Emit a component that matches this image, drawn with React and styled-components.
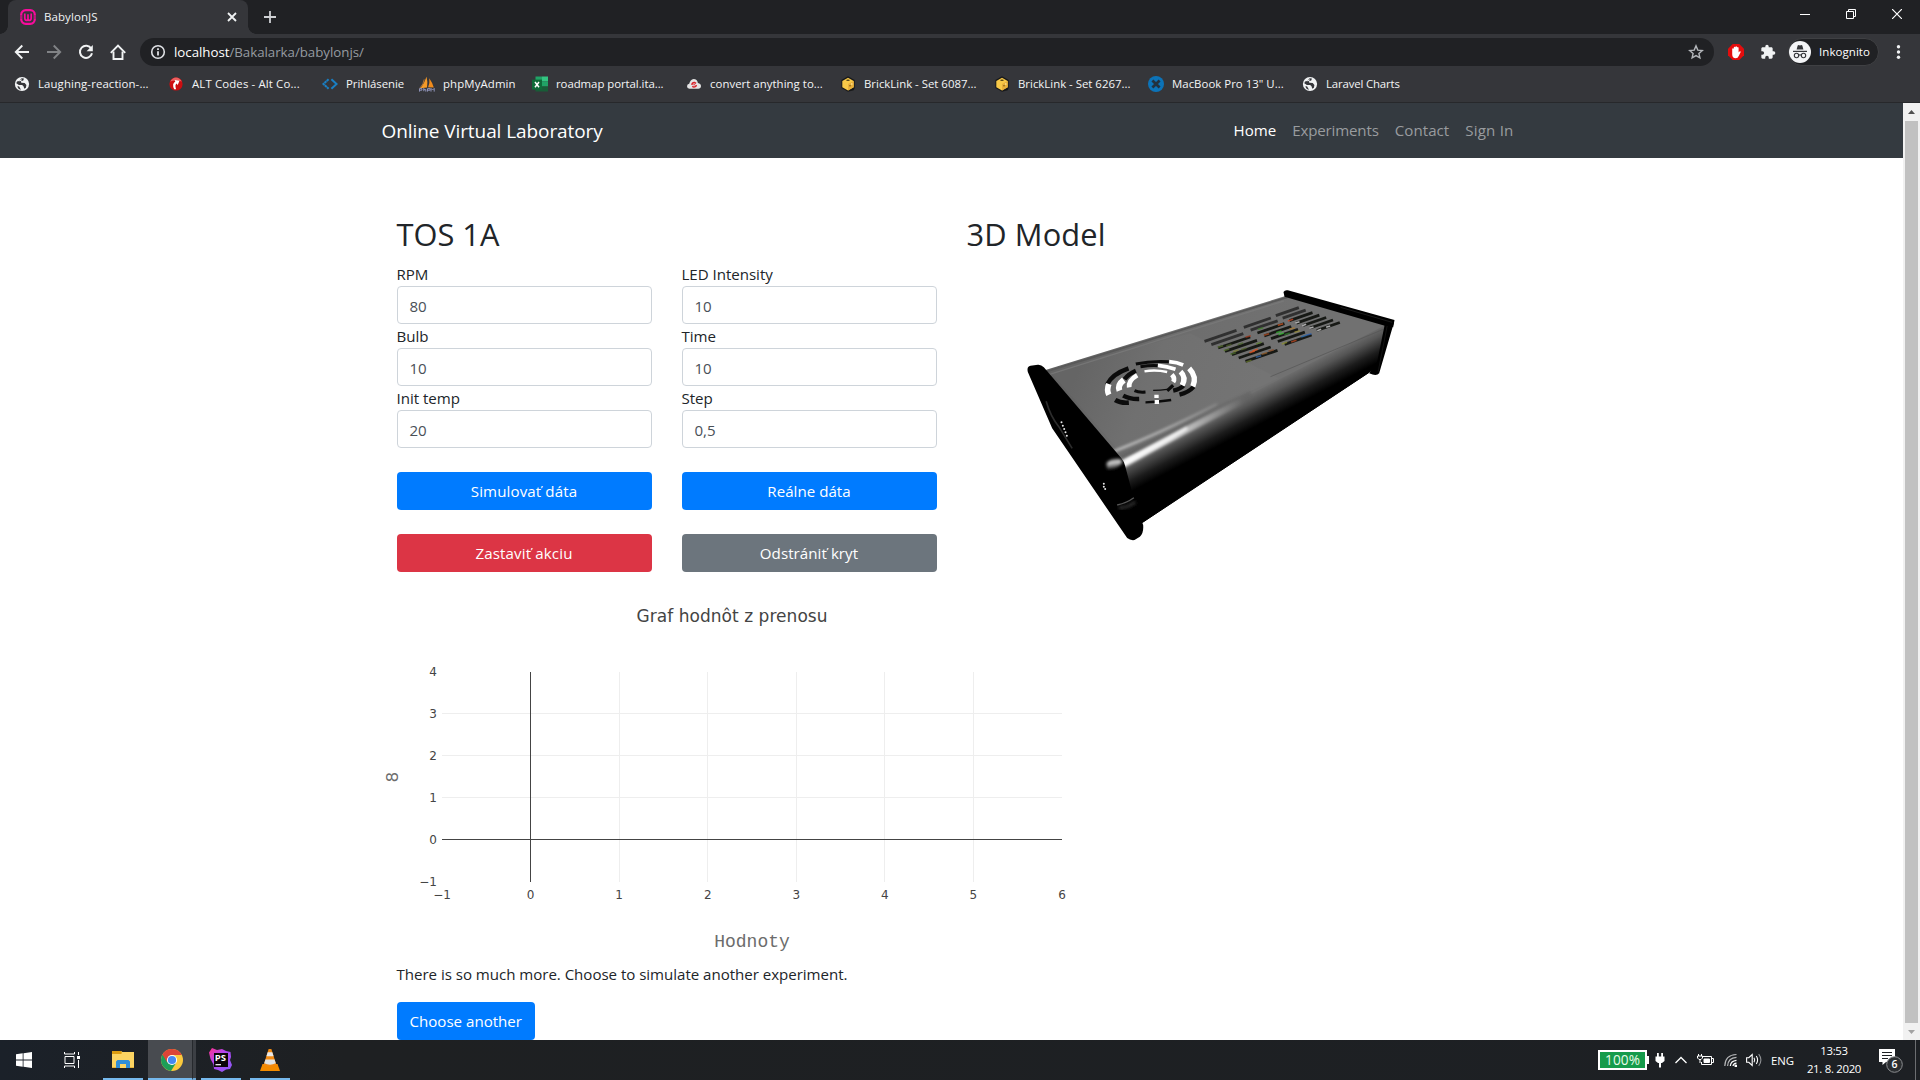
import React from "react";
import styled, { createGlobalStyle } from "styled-components";

const UI_FONT = `"Open Sans", "Noto Sans", sans-serif`;
const CHART_FONT = `"DejaVu Sans", sans-serif`;
const MONO_FONT = `"Liberation Mono", monospace`;

const GlobalStyle = createGlobalStyle`
  *, *::before, *::after { box-sizing: border-box; }
  html, body { margin: 0; padding: 0; overflow: hidden; }
  body { font-family: ${UI_FONT}; background: #fff; }
`;

const Screen = styled.div`
  width: 1920px;
  height: 1080px;
  display: flex;
  flex-direction: column;
  overflow: hidden;
`;

/* ---------- browser chrome ---------- */

const TabStrip = styled.div`
  height: 34px;
  flex: none;
  display: flex;
  align-items: flex-start;
  background: #202124;
  padding-left: 8px;
`;

const Tab = styled.div`
  position: relative;
  width: 240px;
  height: 34px;
  display: flex;
  align-items: center;
  padding: 0 10px 0 12px;
  background: #35363a;
  border-radius: 8px 8px 0 0;
  &::before,
  &::after {
    content: "";
    position: absolute;
    bottom: 0;
    width: 8px;
    height: 8px;
  }
  &::before {
    left: -8px;
    background: radial-gradient(circle at 0 0, transparent 7.5px, #35363a 8px);
  }
  &::after {
    right: -8px;
    background: radial-gradient(circle at 100% 0, transparent 7.5px, #35363a 8px);
  }
`;

const TabTitle = styled.span`
  flex: 1;
  margin-left: 8px;
  font-size: 11.5px;
  letter-spacing: 0.08px;
  line-height: 16px;
  color: #f1f3f4;
`;

const NewTab = styled.div`
  display: flex;
  margin: 11px 0 0 16px;
`;

const WindowButtons = styled.div`
  margin-left: auto;
  display: flex;
`;

const WindowButton = styled.div`
  width: 46px;
  height: 28px;
  display: flex;
  align-items: center;
  justify-content: center;
`;

const Toolbar = styled.div`
  height: 34px;
  flex: none;
  display: flex;
  align-items: center;
  background: #35363a;
  padding: 2px 13px 0 14px;
`;

const ToolIcon = styled.div`
  width: 16px;
  height: 16px;
  margin-right: 16px;
  display: flex;
`;

const Omnibox = styled.div`
  width: 1574px;
  height: 28px;
  display: flex;
  align-items: center;
  margin-left: -2px;
  padding: 0 10px;
  border-radius: 14px;
  background: #202124;
`;

const Url = styled.span`
  flex: 1;
  margin-left: 8px;
  font-size: 13.3px;
  letter-spacing: -0.03px;
  line-height: 18px;
  color: #969ba1;
  b {
    font-weight: 400;
    color: #fff;
  }
`;

const ExtensionIcon = styled.div`
  width: 16px;
  height: 16px;
  display: flex;
  margin-left: ${(p) => p.$gap}px;
`;

const Profile = styled.div`
  width: 91px;
  height: 28px;
  display: flex;
  align-items: center;
  gap: 8px;
  margin-left: 12px;
  border: 1px solid #3f4043;
  border-radius: 14px;
  background: #202124;
  color: #fff;
  font-size: 11.5px;
  letter-spacing: 0.06px;
  line-height: 16px;
`;

const MenuDots = styled.div`
  display: flex;
  margin-left: auto;
`;

const Bookmarks = styled.div`
  height: 35px;
  flex: none;
  display: flex;
  align-items: center;
  padding: 0 0 2px 14px;
  background: #35363a;
  border-bottom: 1px solid #27282b;
`;

const Bookmark = styled.div`
  width: ${(p) => p.$width}px;
  flex: none;
  display: flex;
  align-items: center;
  gap: 8px;
  font-size: 11.4px;
  letter-spacing: ${(p) => p.$spacing || 0}px;
  line-height: 16px;
  color: #f4f5f6;
  white-space: nowrap;
  svg {
    flex: none;
  }
`;

/* ---------- page ---------- */

const Viewport = styled.div`
  height: 937px;
  flex: none;
  display: flex;
  background: #fff;
`;

const Page = styled.main`
  width: 1903px;
  height: 937px;
  overflow: hidden;
  color: #212529;
  font-size: 15.1px;
  line-height: 24px;
`;

const Navbar = styled.nav`
  height: 55px;
  background: #343a40;
`;

const Container = styled.div`
  width: 1140px;
  margin: 0 auto;
`;

const NavInner = styled(Container)`
  height: 54px;
  display: flex;
  align-items: center;
  justify-content: space-between;
`;

const Brand = styled.span`
  padding-top: 1px;
  font-size: 19px;
  line-height: 30px;
  letter-spacing: -0.08px;
  color: #fff;
`;

const NavLinks = styled.div`
  display: flex;
`;

const NavLink = styled.a`
  padding: 0 8px;
  letter-spacing: ${(p) => p.$spacing || 0}px;
  color: ${(p) => (p.$active ? "#fff" : "#999c9f")};
`;

const Row = styled.div`
  display: grid;
  grid-template-columns: 1fr 1fr;
`;

const Intro = styled(Row)`
  padding-top: 56.6px;
  height: 414px;
`;

const Column = styled.section`
  padding: 0 15px;
`;

const Heading = styled.h2`
  margin: 0 0 9px;
  font-size: 30.8px;
  font-weight: 400;
  line-height: 38.4px;
  letter-spacing: ${(p) => p.$spacing || 0}px;
`;

const FormGrid = styled.div`
  display: grid;
  grid-template-columns: 255px 255px;
  column-gap: 30px;
`;

const Field = styled.label`
  display: block;
  height: 62px;
  letter-spacing: -0.03px;
`;

const Input = styled.span`
  display: flex;
  align-items: center;
  height: 38px;
  padding: 2px 12px 0;
  border: 1px solid #ced4da;
  border-radius: 4px;
  color: #495057;
`;

const Buttons = styled(FormGrid)`
  row-gap: 24px;
  padding-top: 24px;
`;

const tones = { primary: "#007bff", danger: "#dc3545", secondary: "#6c757d" };

const Button = styled.div`
  display: inline-flex;
  align-items: center;
  justify-content: center;
  height: 38px;
  padding: 0 13px;
  border-radius: 4px;
  background: ${(p) => tones[p.$tone]};
  color: #fff;
  letter-spacing: ${(p) => p.$spacing || 0}px;
`;

const Model = styled.svg`
  display: block;
`;

const ChartSvg = styled.svg`
  display: block;
  width: 700px;
  height: 390px;
  text {
    font-family: ${CHART_FONT};
    fill: #444;
  }
  text.axis-title {
    font-family: ${MONO_FONT};
    font-size: 18px;
    fill: #6c6c6c;
  }
`;

const Footer = styled.div`
  padding: 0 15px;
`;

const Paragraph = styled.p`
  margin: 0 0 16px;
  letter-spacing: -0.035px;
`;

const Scrollbar = styled.div`
  width: 17px;
  display: flex;
  flex-direction: column;
  background: #f1f1f1;
`;

const ScrollArrow = styled.div`
  height: 17px;
  display: flex;
  align-items: center;
  justify-content: center;
`;

const Thumb = styled.div`
  flex: 1;
  margin: 1px 2px 0;
  background: #c1c1c1;
`;

/* ---------- taskbar ---------- */

const Taskbar = styled.footer`
  height: 40px;
  flex: none;
  display: flex;
  background: linear-gradient(90deg, #1b2129, #1e2022 18%, #1d2024);
  color: #fff;
`;

const TaskItem = styled.div`
  width: ${(p) => p.$width || 48}px;
  margin-left: ${(p) => p.$gap || 0}px;
  height: 40px;
  display: flex;
  align-items: center;
  justify-content: center;
  background: ${(p) => (p.$active ? "#484b50" : "transparent")};
  border-bottom: ${(p) => (p.$open ? "2px solid #76b9ed" : "0")};
  padding-top: ${(p) => (p.$open ? 2 : 0)}px;
  padding-left: ${(p) => (p.$active ? 4 : 0)}px;
`;

const WindowStack = styled.div`
  width: 4px;
  height: 40px;
  background: #3c3f44;
  border-left: 1px solid #26292d;
  border-bottom: 2px solid #6aa5d4;
`;

const Tray = styled.div`
  margin-left: auto;
  height: 40px;
  display: flex;
  align-items: center;
`;

const BatteryMeter = styled.div`
  position: relative;
  width: 49px;
  height: 20px;
  display: flex;
  align-items: center;
  justify-content: center;
  border: 2px solid #fff;
  background: #169b4b;
  color: #e9fbe9;
  font-size: 13.6px;
  line-height: 16px;
  letter-spacing: 0.1px;
  &::after {
    content: "";
    position: absolute;
    right: -4px;
    top: 4px;
    width: 2px;
    height: 8px;
    background: #fff;
  }
`;

const TrayIcon = styled.div`
  display: flex;
  margin-left: ${(p) => p.$gap}px;
`;

const Language = styled.span`
  width: 24px;
  margin-left: 8px;
  font-size: 11.4px;
  letter-spacing: -0.1px;
`;

const Clock = styled.div`
  width: 60px;
  margin-left: 9px;
  text-align: center;
  font-size: 11.4px;
  line-height: 18px;
  letter-spacing: -0.3px;
  white-space: nowrap;
`;

const DesktopPeek = styled.div`
  width: 5px;
  height: 40px;
  margin-left: 12px;
  border-left: 1px solid #6c6e71;
`;

/* ---------- icons ---------- */

const WampIcon = () => (
  <svg width="16" height="16" viewBox="0 0 16 16" fill="none" stroke="#f90b9c">
    <rect x="1.2" y="1.2" width="13.6" height="13.6" rx="4.5" strokeWidth="2.2" />
    <path d="M4.8 4.5v4.6q0 2.3 1.7 2.3 1.5 0 1.5-2V5.2v4.2q0 2 1.5 2 1.7 0 1.7-2.3V4.5" strokeWidth="1.7" />
    <path d="M0 7h2M0 9h2M14 7h2M14 9h2" stroke="#35363a" strokeWidth=".6" />
  </svg>
);

const GlobeIcon = () => (
  <svg width="16" height="16" viewBox="0 0 16 16">
    <circle cx="8" cy="8" r="7.1" fill="#f1f3f4" />
    <path d="M3 5.6Q6 5 7.6 2.2l2.3.3-.6 1.9-2.4.9.4 1.5 3.4.1 1.7 2.1-.5 2.8-1.6.9-.8-2.5-1.4-1.3-3.2.1L2.3 7.3z" fill="#35363a" />
    <path d="M3.2 10.4l1.8-.1 2 3.4q-2.8-.5-3.8-3.3z" fill="#35363a" />
    <path d="M5.3 4.2L8 3.2l-.4 1.3-2 1z" fill="#f1f3f4" />
  </svg>
);

const AltIcon = () => (
  <svg width="16" height="16" viewBox="0 0 16 16">
    <circle cx="8" cy="8" r="6.6" fill="#cc0d10" />
    <path d="M2.2 5.5Q4 1.6 8 1.4q4 .2 5.8 4.1Q8 3.4 2.2 5.5z" fill="#ec5f5f" />
    <path d="M6.2 13.2Q3.5 8 7.3 5.6L6.6 4l4.9.7-1.9 4.5-.8-1.6q-2.3 1.2-.7 5.6z" fill="#fff" />
  </svg>
);

const CodeIcon = () => (
  <svg width="16" height="16" viewBox="0 0 16 16" fill="none" stroke="#1a7fc3" strokeWidth="2">
    <path d="M6.6 3.2L1.4 8l5.2 4.8" strokeDasharray="2.6 .4" />
    <path d="M9.4 3.2L14.6 8l-5.2 4.8" />
  </svg>
);

const SailIcon = () => (
  <svg width="16" height="16" viewBox="0 0 16 16">
    <path d="M7.5.8Q9 6 8 11.4L1.5 12.2Q5.6 7 7.5.8z" fill="#f59a28" />
    <path d="M10.3 2.2q3 4.2 4.5 9.4l-5.7-.3Q11 7 10.3 2.2z" fill="#f08b1c" />
    <path d="M5.2 3.4Q4.8 8 .8 12.2" stroke="#c8823a" fill="none" strokeWidth=".8" />
    <path d="M.5 15.6v-3h2.4v1.6H.8M4.8 12v3.2m0-1.6h2v2M8.5 15.6v-3h2.6v1.6H8.7M12 15.6v-3.2l1.6 1.6 1.6-1.6v3.2" stroke="#8f93b8" fill="none" strokeWidth="1" />
  </svg>
);

const ExcelIcon = () => (
  <svg width="16" height="16" viewBox="0 0 16 16">
    <path d="M3.5.5H10v5H3.5z" fill="#21a366" />
    <path d="M10 .5h6v5h-6z" fill="#33c481" />
    <path d="M3.5 5.5H10v5H3.5z" fill="#107c41" />
    <path d="M10 5.5h6v5h-6z" fill="#21a366" />
    <path d="M3.5 10.5H16v5H3.5z" fill="#185c37" />
    <path d="M0 3.6h10v10H0z" fill="#0e6a38" />
    <path d="M3 6l4 5.2M7 6l-4 5.2" stroke="#fff" strokeWidth="1.5" />
  </svg>
);

const CloudIcon = () => (
  <svg width="16" height="16" viewBox="0 0 16 16">
    <path d="M3.4 12.8Q1 12.6 1 10.2q.1-2 2.2-2.4Q4.2 3.5 7.6 3q3.6.1 4.3 3.9 3 .5 3.1 3.2-.1 2.6-2.8 2.7z" fill="#e4e4e4" />
    <path d="M5.8 8.8q.4-2.5 2.7-2.3l1.6.9M10.4 9q-.5 2.3-2.6 2.1l-1.6-.8" stroke="#d9232b" strokeWidth="1.5" fill="none" />
    <circle cx="8.1" cy="8.8" r=".8" fill="#d9232b" />
  </svg>
);

const BrickIcon = () => (
  <svg width="16" height="16" viewBox="0 0 16 16">
    <path d="M8 .3l6.7 3.8v7.8l-1 2.3L8 15.7l-6.6-3.8V4.1z" fill="#17181a" />
    <path d="M8 1.8l5.7 3.2v6.2L8 14.4l-5.7-3.2V5z" fill="#f8c948" />
    <path d="M8 8l5.7-3v6.2L8 14.4z" fill="#e9b03a" />
    <ellipse cx="8" cy="4.2" rx="1.8" ry=".8" fill="#4f4115" />
    <circle cx="10" cy="9.8" r=".8" fill="#7b5c14" />
    <circle cx="11.8" cy="8" r=".8" fill="#fff0b0" />
  </svg>
);

const CrossIcon = () => (
  <svg width="16" height="16" viewBox="0 0 16 16">
    <circle cx="8" cy="8" r="8" fill="#0c73b8" />
    <path d="M4.4 4.6l7.2 6.8M11.6 4.6l-7.2 6.8" stroke="#22313f" strokeWidth="2.8" />
  </svg>
);

const AdblockIcon = () => (
  <svg width="16" height="16" viewBox="0 0 16 16">
    <path d="M4.7 0h6.6L16 4.7v6.6L11.3 16H4.7L0 11.3V4.7z" fill="#e40d0d" />
    <path d="M4.2 8V5q.1-.8.8-.8t.8.8V3.6q.1-.8.8-.8t.8.8V3q.1-.8.8-.8T9 3v.8q.1-.7.8-.7t.8.8v4.7l.8-1q.8-.6 1.400.1l-1.900 4q-1 2.500-3.200 2.500-3.500 0-3.500-4z" fill="#fff" />
  </svg>
);

const PuzzleIcon = () => (
  <svg width="16" height="16" viewBox="0 0 24 24" fill="#f1f3f4">
    <path d="M20.5 11H19V7c0-1.100-.9-2-2-2h-4V3.500a2.500 2.500 0 0 0-5 0V5H4c-1.100 0-2 .9-2 2v3.800h1.500a2.700 2.700 0 0 1 0 5.400H2V20c0 1.100.9 2 2 2h3.800v-1.500a2.700 2.700 0 0 1 5.400 0V22H17c1.100 0 2-.9 2-2v-4h1.500a2.500 2.500 0 0 0 0-5z" />
  </svg>
);

const IncognitoIcon = () => (
  <svg width="22" height="22" viewBox="0 0 22 22">
    <circle cx="11" cy="11" r="11" fill="#f4f5f7" />
    <path d="M7.600 8.400l1.100-4 .9-.4 1.400.5 1.400-.5.9.4 1.100 4z" fill="#35363a" />
    <path d="M4 10.400h14" stroke="#35363a" strokeWidth="1.200" />
    <g fill="none" stroke="#35363a" strokeWidth="1.100">
      <circle cx="7.500" cy="14.500" r="2.200" />
      <circle cx="14.500" cy="14.500" r="2.200" />
      <path d="M9.700 14.200q1.300-.9 2.600 0" />
    </g>
  </svg>
);

const StartIcon = () => (
  <svg width="16" height="16" viewBox="0 0 16 16" fill="#fff">
    <path d="M0 2.300l6.700-1v6.300H0zM7.500 1.200L16 0v7.600H7.500zM0 8.400h6.700v6.300l-6.700-1zM7.500 8.400H16V16l-8.500-1.200z" />
  </svg>
);

const TaskViewIcon = () => (
  <svg width="17" height="16" viewBox="0 0 17 16" fill="none" stroke="#fff">
    <path d="M1 4.500h9v7H1z" />
    <path d="M.5 0v2h10V0M.5 16v-2h10v2" />
    <path d="M14.500 0v3M14.500 8v8" />
    <path d="M13 4h3v3h-3z" fill="#fff" stroke="none" />
  </svg>
);

const FolderIcon = () => (
  <svg width="22" height="20" viewBox="0 0 22 20">
    <path d="M0 1h9l1.500 1H22v16H0z" fill="#fcd462" />
    <path d="M0 1h9l1 2-1 1H0z" fill="#dc9c10" />
    <path d="M4 18v-6.500L5.500 10h11l1.500 1.500V18h-4v-4H8v4z" fill="#2f8ed8" />
    <path d="M0 17h4v1H0zM18 17h4v1h-4z" fill="#e8b33a" />
  </svg>
);

const ChromeIcon = () => (
  <svg width="22" height="22" viewBox="0 0 22 22">
    <circle cx="11" cy="11" r="11" fill="#fbc93d" />
    <path d="M11 11L1.500 5.500A11 11 0 0 0 10 21.950l5.200-8.200z" fill="#1e9e58" />
    <path d="M1.500 5.500A11 11 0 0 1 20.700 5.900H11L6.300 13.500z" fill="#dc4437" />
    <circle cx="11" cy="11" r="5.100" fill="#fff" />
    <circle cx="11" cy="11" r="4.100" fill="#4688f1" />
  </svg>
);

const StormIcon = () => (
  <svg width="24" height="24" viewBox="0 0 24 24">
    <defs>
      <linearGradient id="storm" x1="0" y1="0" x2="1" y2="1">
        <stop offset="0" stopColor="#ff318c" />
        <stop offset=".4" stopColor="#b345f1" />
        <stop offset="1" stopColor="#8a5cf7" />
      </linearGradient>
    </defs>
    <path d="M3 0l5 2 5-1 4 2 4.500 1 .500 5-1 3 2 5-2 4-4 .5-4 2.500-4-2-4-1-.500-4.500L1.500 11 0 4.500z" fill="url(#storm)" />
    <path d="M5 5h14v14H5z" fill="#0b0508" />
    <text x="5.700" y="12.800" fontSize="9.500" fontWeight="700" fill="#fff" fontFamily="Open Sans, sans-serif">PS</text>
    <path d="M6.500 16.700h5.500" stroke="#fff" strokeWidth="1.200" />
  </svg>
);

const VlcIcon = () => (
  <svg width="22" height="24" viewBox="0 0 22 24">
    <path d="M3.500 16h15L21 23H1z" fill="#f48b00" />
    <path d="M9.600 1h2.800l5 16q-6.400 3.500-12.800 0z" fill="#f28a12" />
    <path d="M8.700 4.200h4.600l1.300 4H7.400z" fill="#e9e9e9" />
    <path d="M6.400 11.500h9.200l1.200 3.800q-5.800 2.800-11.600 0z" fill="#dfe3e6" />
  </svg>
);

/* ---------- 3D model of the plant ---------- */

const ventGroups = [
  { x: 762, y: 424, dx: 96, dy: -33, stepX: 20.500, stepY: 10 },
  { x: 880, y: 382, dx: 81, dy: -28, stepX: 20.400, stepY: 8.500 },
  { x: 976, y: 347, dx: 69, dy: -24, stepX: 20.500, stepY: 7.400 },
];

const darkGrille = [
  ["M470 553Q485 522 534 505", 13],
  ["M556 492Q600 482 655 485", 9],
  ["M522 538Q533 522 556 512", 13],
  ["M570 500Q600 495 625 497", 9],
  ["M494 600Q510 610 535 608", 14],
  ["M518 587Q538 598 566 597", 13],
  ["M552 572Q565 578 585 576", 9],
  ["M585 607Q625 606 662 600", 7],
  ["M608 571Q630 571 650 568", 4],
  ["M650 572L668 556", 10],
  ["M668 572Q690 567 700 556", 13],
  ["M687 584Q715 577 730 560", 13],
];

const whiteGrille = [
  ["M475 584Q468 570 475 552", 17],
  ["M507 572Q500 555 520 540", 18],
  ["M536 562Q533 542 560 526", 14],
  ["M656 485Q680 487 698 495", 11],
  ["M622 496Q650 499 675 508", 11],
  ["M582 514Q615 508 650 516", 7],
  ["M664 524Q675 536 668 546", 14],
  ["M690 515Q708 532 695 556", 16],
  ["M716 505Q740 530 727 559", 16],
  ["M618 584L618 594M619 600L619 612", 13],
];

const parts = [
  [930, 386, "#3f7d2a"], [948, 404, "#b04a20"], [985, 396, "#2fae2c"], [992, 402, "#3ac638"],
  [1025, 386, "#a9782c"], [1040, 395, "#9d9038"], [1075, 404, "#2d62b4"], [1010, 402, "#2f7f2c"],
  [1002, 430, "#8c9030"], [1030, 424, "#c24a22"], [1060, 409, "#276bb0"], [990, 374, "#d0551f"],
  [810, 440, "#55702a"], [835, 436, "#4c5f28"], [828, 450, "#56732c"], [856, 453, "#7a7c2e"],
  [848, 461, "#4a6c28"], [893, 410, "#a33a1e"], [905, 456, "#e0521c"], [914, 451, "#e2521c"],
  [895, 484, "#65752c"], [924, 470, "#2f63ad"], [942, 461, "#945b25"], [962, 452, "#8c4a22"],
  [880, 447, "#4f6227"], [925, 430, "#5b7e2c"], [1020, 361, "#cf4420"], [870, 432, "#49652a"],
];

const DeviceModel = () => (
  <Model width="555" height="310" viewBox="49.5 186 1665 930">
    <defs>
      <linearGradient id="top" gradientUnits="userSpaceOnUse" x1="420" y1="420" x2="900" y2="620">
        <stop offset="0" stopColor="#626262" />
        <stop offset=".4" stopColor="#6d6d6d" />
        <stop offset="1" stopColor="#717171" />
      </linearGradient>
      <linearGradient id="side" gradientUnits="userSpaceOnUse" x1="900" y1="578" x2="945" y2="664">
        <stop offset="0" stopColor="#717171" />
        <stop offset=".3" stopColor="#555" />
        <stop offset=".7" stopColor="#1c1c1c" />
        <stop offset="1" stopColor="#000" />
      </linearGradient>
      <linearGradient id="shine" gradientUnits="userSpaceOnUse" x1="510" y1="785" x2="880" y2="600">
        <stop offset="0" stopColor="#fff" />
        <stop offset=".4" stopColor="#fff" stopOpacity=".75" />
        <stop offset="1" stopColor="#fff" stopOpacity="0" />
      </linearGradient>
      <linearGradient id="corner" x1=".3" y1="0" x2=".5" y2="1">
        <stop offset="0" stopColor="#333" />
        <stop offset=".35" stopColor="#ddd" />
        <stop offset="1" stopColor="#000" />
      </linearGradient>
      <filter id="soften" x="-20%" y="-20%" width="140%" height="140%">
        <feGaussianBlur stdDeviation="5" />
      </filter>
      <clipPath id="body">
        <path d="M285 510L1005 288L1312 372L1282 500L575 968L540 960L500 775z" />
      </clipPath>
    </defs>

    <path d="M285 510L1005 288L1312 372L1282 500L575 968L540 960L500 775z" fill="url(#top)" />
    <g clipPath="url(#body)">
      <path d="M495 790L1312 371L1312 560L560 1000L500 1000z" fill="url(#side)" />
      <path d="M285 516L1010 292" stroke="#585858" strokeWidth="5" />
      <path d="M295 524L1000 303" stroke="#7d7d7d" strokeWidth="4" opacity=".6" />
      <path d="M295 510L720 400L985 535L505 752z" fill="#fff" opacity=".025" />
      <path d="M490 754Q630 700 800 612" stroke="url(#shine)" strokeWidth="6" fill="none" opacity=".7" filter="url(#soften)" />
      <path d="M510 772Q640 710 900 580" stroke="#4b4b4b" strokeWidth="10" fill="none" opacity=".3" filter="url(#soften)" />
      <path d="M505 800Q680 702 900 590" stroke="url(#shine)" strokeWidth="20" fill="none" filter="url(#soften)" />
      <path d="M520 785Q620 738 710 684" stroke="#fff" strokeWidth="7" fill="none" filter="url(#soften)" />
      <path d="M960 530L1303 386" stroke="#555" strokeWidth="2" />
    </g>
    <path d="M1256 517L575 968" stroke="#000" strokeWidth="3" />

    {ventGroups.map((g) =>
      [0, 1, 2, 3, 4, 5, 6].map((i) => (
        <path
          key={`${g.x}-${i}`}
          d={`M${g.x + i * g.stepX} ${g.y + i * g.stepY}l${g.dx} ${g.dy}`}
          stroke={i < 2 ? "#303030" : "#171915"}
          strokeWidth="8.500"
        />
      ))
    )}
    {parts.map(([x, y, color]) => (
      <path key={`${x}-${y}`} d={`M${x - 8} ${y + 2}l16 -5`} stroke={color} strokeWidth="4.500" opacity=".75" />
    ))}
    {[[1035, 369], [1055, 377], [1077, 385], [1100, 392], [1127, 382]].map(([x, y]) => (
      <path key={x} d={`M${x} ${y}l12 -4`} stroke="#aaa" strokeWidth="5" />
    ))}

    {darkGrille.map(([d, w]) => (
      <path key={d} d={d} stroke="#0c0c0c" strokeWidth={w} fill="none" />
    ))}
    {whiteGrille.map(([d, w]) => (
      <path key={d} d={d} stroke="#fff" strokeWidth={w} fill="none" />
    ))}

    <path d="M999 276Q1003 269 1012 271L1332 360L1328 382L1303 377L1002 290z" fill="#000" />
    <path d="M1303 372L1331 365L1286 520Q1278 530 1256 520L1280 486z" fill="#000" />
    <path d="M1170 322L1325 367" stroke="#2a2a2a" strokeWidth="2" />
    <path d="M1310 378L1283 515" stroke="#1c1c1c" strokeWidth="2" />

    <path
      d="M232 516Q228 499 240 497L262 494Q272 493 280 502L512 774Q522 786 524 798L555 915L578 975Q580 1000 568 1010L552 1020Q540 1022 530 1014L305 685z"
      fill="#000"
    />
    <path d="M468 790Q480 772 508 776Q520 786 512 792Q494 812 470 808z" fill="url(#corner)" filter="url(#soften)" />
    <path d="M500 915Q530 908 550 893" stroke="#5a5a5a" strokeWidth="4" fill="none" />
    <path d="M505 924Q535 922 554 906" stroke="#2c2c2c" strokeWidth="10" fill="none" filter="url(#soften)" />
    <path d="M287 604Q300 650 325 680L365 745" stroke="#2c2c2c" strokeWidth="5" fill="none" />
    {[[333, 667], [337, 677], [341, 687], [345, 697], [349, 707], [460, 851], [460, 860], [464, 867]].map(([x, y]) => (
      <circle key={`${x}-${y}`} cx={x} cy={y} r="3" fill="#e8e8e8" />
    ))}
  </Model>
);

/* ---------- chart ---------- */

const xTicks = ["−1", "0", "1", "2", "3", "4", "5", "6"];
const yTicks = ["4", "3", "2", "1", "0", "−1"];

const Chart = () => (
  <ChartSvg viewBox="0 0 700 390">
    <g shapeRendering="crispEdges" stroke="#eee" strokeWidth="1">
      {[2, 3, 4, 5, 6].map((i) => (
        <path key={i} d={`M${Math.floor(60 + i * 88.57) + 0.5} 100V310`} />
      ))}
      {[1, 2, 3].map((i) => (
        <path key={i} d={`M60 ${99.5 + i * 42}H680`} />
      ))}
      <path d="M60 267.500H680M148.500 100V310" stroke="#444" />
    </g>
    <text x="350" y="50" fontSize="17" textAnchor="middle" textLength="191">Graf hodnôt z prenosu</text>
    {xTicks.map((t, i) => (
      <text key={t} x={60 + i * 88.57} y="327" fontSize="12" textAnchor="middle">{t}</text>
    ))}
    {yTicks.map((t, i) => (
      <text key={t} x="55" y={104 + i * 42} fontSize="12" textAnchor="end">{t}</text>
    ))}
    <text className="axis-title" x="370" y="375" textAnchor="middle">Hodnoty</text>
    <text className="axis-title" transform="translate(16 205) rotate(-90)" textAnchor="middle">8</text>
  </ChartSvg>
);

/* ---------- data ---------- */

const bookmarks = [
  { title: "Laughing-reaction-...", icon: GlobeIcon, width: 154, spacing: 0.11 },
  { title: "ALT Codes - Alt Co...", icon: AltIcon, width: 154, spacing: 0.14 },
  { title: "Prihlásenie", icon: CodeIcon, width: 97, spacing: -0.05 },
  { title: "phpMyAdmin", icon: SailIcon, width: 113, spacing: 0.12 },
  { title: "roadmap portal.ita...", icon: ExcelIcon, width: 154, spacing: -0.05 },
  { title: "convert anything to...", icon: CloudIcon, width: 154, spacing: 0.04 },
  { title: "BrickLink - Set 6087...", icon: BrickIcon, width: 154 },
  { title: "BrickLink - Set 6267...", icon: BrickIcon, width: 154 },
  { title: 'MacBook Pro 13" U...', icon: CrossIcon, width: 154, spacing: 0.03 },
  { title: "Laravel Charts", icon: GlobeIcon, width: 154, spacing: -0.15 },
];

const fields = [
  ["RPM", "80"],
  ["LED Intensity", "10"],
  ["Bulb", "10"],
  ["Time", "10"],
  ["Init temp", "20"],
  ["Step", "0,5"],
];

const actions = [
  ["Simulovať dáta", "primary", 0.12],
  ["Reálne dáta", "primary", 0.02],
  ["Zastaviť akciu", "danger", 0.13],
  ["Odstrániť kryt", "secondary", 0.06],
];

export default function App() {
  return (
    <Screen>
      <GlobalStyle />
      <TabStrip>
        <Tab>
          <WampIcon />
          <TabTitle>BabylonJS</TabTitle>
          <svg width="12" height="12" viewBox="0 0 12 12" stroke="#f1f3f4" strokeWidth="1.800">
            <path d="M2 2l8 8M10 2l-8 8" />
          </svg>
        </Tab>
        <NewTab>
          <svg width="12" height="12" viewBox="0 0 12 12" stroke="#cfd1d4" strokeWidth="1.800">
            <path d="M6 0v12M0 6h12" />
          </svg>
        </NewTab>
        <WindowButtons>
          <WindowButton>
            <svg width="10" height="10" viewBox="0 0 10 10" stroke="#fff"><path d="M0 5.500h10" /></svg>
          </WindowButton>
          <WindowButton>
            <svg width="10" height="10" viewBox="0 0 10 10" stroke="#fff" fill="none">
              <path d="M.5 2.500h7v7h-7zM2.500 2.500v-2h7v7h-2" />
            </svg>
          </WindowButton>
          <WindowButton>
            <svg width="10" height="10" viewBox="0 0 10 10" stroke="#fff" strokeWidth="1.200"><path d="M0 0l10 10M10 0L0 10" /></svg>
          </WindowButton>
        </WindowButtons>
      </TabStrip>

      <Toolbar>
        <ToolIcon>
          <svg width="16" height="16" viewBox="0 0 16 16" fill="none" stroke="#f1f3f4" strokeWidth="1.900">
            <path d="M15 8H2.500M8.300 1.500L1.800 8l6.500 6.500" />
          </svg>
        </ToolIcon>
        <ToolIcon>
          <svg width="16" height="16" viewBox="0 0 16 16" fill="none" stroke="#818386" strokeWidth="1.900">
            <path d="M1 8h12.500M7.700 1.500L14.200 8l-6.500 6.500" />
          </svg>
        </ToolIcon>
        <ToolIcon>
          <svg width="16" height="16" viewBox="0 0 16 16" fill="none" stroke="#f1f3f4" strokeWidth="2">
            <path d="M13.300 4.700A6.100 6.100 0 1 0 14 9.200" />
            <path d="M14.800 1v6.200H8.600z" fill="#f1f3f4" stroke="none" />
          </svg>
        </ToolIcon>
        <ToolIcon>
          <svg width="16" height="16" viewBox="0 0 16 16" fill="none" stroke="#f1f3f4" strokeWidth="1.900">
            <path d="M.8 8.800L8 1.500l7.200 7.300" />
            <path d="M3.500 7.500V15h9V7.500" />
          </svg>
        </ToolIcon>
        <Omnibox>
          <svg width="16" height="16" viewBox="0 0 16 16" fill="none" stroke="#dfe1e5" strokeWidth="1.600">
            <circle cx="8" cy="8" r="6.300" />
            <path d="M8 7.200v4.200M8 4.300v1.700" strokeWidth="1.800" />
          </svg>
          <Url><b>localhost</b>/Bakalarka/babylonjs/</Url>
          <svg width="16" height="16" viewBox="0 0 16 16" fill="none" stroke="#b4b7bb" strokeWidth="1.400">
            <path d="M8 1.900l1.800 4.200 4.500.4-3.400 3 1 4.400L8 11.600l-3.900 2.300 1-4.400-3.400-3 4.500-.4z" />
          </svg>
        </Omnibox>
        <ExtensionIcon $gap={14}><AdblockIcon /></ExtensionIcon>
        <ExtensionIcon $gap={16}><PuzzleIcon /></ExtensionIcon>
        <Profile>
          <IncognitoIcon />
          <span>Inkognito</span>
        </Profile>
        <MenuDots>
          <svg width="17" height="16" viewBox="0 0 17 16" fill="#f1f3f4">
            <circle cx="8.500" cy="2.800" r="1.700" />
            <circle cx="8.500" cy="8" r="1.700" />
            <circle cx="8.500" cy="13.200" r="1.700" />
          </svg>
        </MenuDots>
      </Toolbar>

      <Bookmarks>
        {bookmarks.map(({ title, icon: Icon, width, spacing }) => (
          <Bookmark key={title} $width={width} $spacing={spacing}>
            <Icon />
            <span>{title}</span>
          </Bookmark>
        ))}
      </Bookmarks>

      <Viewport>
        <Page>
          <Navbar>
            <NavInner>
              <Brand>Online Virtual Laboratory</Brand>
              <NavLinks>
                <NavLink $active>Home</NavLink>
                <NavLink $spacing={-0.16}>Experiments</NavLink>
                <NavLink $spacing={0.05}>Contact</NavLink>
                <NavLink $spacing={0.18}>Sign In</NavLink>
              </NavLinks>
            </NavInner>
          </Navbar>
          <Container>
            <Intro>
              <Column>
                <Heading>TOS 1A</Heading>
                <FormGrid>
                  {fields.map(([label, value]) => (
                    <Field key={label}>
                      {label}
                      <Input>{value}</Input>
                    </Field>
                  ))}
                </FormGrid>
                <Buttons>
                  {actions.map(([label, tone, spacing]) => (
                    <Button key={label} $tone={tone} $spacing={spacing}>{label}</Button>
                  ))}
                </Buttons>
              </Column>
              <Column>
                <Heading $spacing={0.12}>3D Model</Heading>
                <DeviceModel />
              </Column>
            </Intro>
            <Chart />
            <Footer>
              <Paragraph>There is so much more. Choose to simulate another experiment.</Paragraph>
              <Button $tone="primary">Choose another</Button>
            </Footer>
          </Container>
        </Page>
        <Scrollbar>
          <ScrollArrow>
            <svg width="7" height="4" viewBox="0 0 7 4" fill="#505050"><path d="M0 4l3.500-4L7 4z" /></svg>
          </ScrollArrow>
          <Thumb />
          <ScrollArrow>
            <svg width="7" height="4" viewBox="0 0 7 4" fill="#a3a3a3"><path d="M0 0l3.500 4L7 0z" /></svg>
          </ScrollArrow>
        </Scrollbar>
      </Viewport>

      <Taskbar>
        <TaskItem><StartIcon /></TaskItem>
        <TaskItem><TaskViewIcon /></TaskItem>
        <TaskItem $open $width={40} $gap={7}><FolderIcon /></TaskItem>
        <TaskItem $open $active $width={44} $gap={5}><ChromeIcon /></TaskItem>
        <WindowStack />
        <TaskItem $open $width={40} $gap={5}><StormIcon /></TaskItem>
        <TaskItem $open $width={40} $gap={9}><VlcIcon /></TaskItem>
        <Tray>
          <BatteryMeter>100%</BatteryMeter>
          <TrayIcon $gap={8}>
            <svg width="10" height="16" viewBox="0 0 10 16" fill="#fff">
              <path d="M2 1h1.800v4H2zM6.200 1H8v4H6.200zM.5 4.500h9V9L7 11H6v4.500H4V11H3L.5 9z" />
            </svg>
          </TrayIcon>
          <TrayIcon $gap={10}>
            <svg width="12" height="8" viewBox="0 0 12 8" fill="none" stroke="#fff" strokeWidth="1.300">
              <path d="M.5 7L6 1.500 11.500 7" />
            </svg>
          </TrayIcon>
          <TrayIcon $gap={10}>
            <svg width="17" height="14" viewBox="0 0 17 14" fill="none" stroke="#fff">
              <path d="M6 3.500h8.500v8H4.500V9" />
              <path d="M15 5.500h1.500v4H15" />
              <path d="M7 6h5.500v3.500H7z" fill="#fff" />
              <path d="M1.500 1v2M4.500 1v2M.5 3h5v2L4 6.500H2L.5 5zM3 6.500V10" />
            </svg>
          </TrayIcon>
          <TrayIcon $gap={10}>
            <svg width="13" height="14" viewBox="0 0 13 14" fill="none" stroke="#fff" strokeWidth="1.200">
              <g stroke="#b5b6b8">
                <path d="M.8 13Q1 2 12.500 1.500" />
                <path d="M3.600 13Q4 5 12.500 4.400" />
              </g>
              <path d="M6.300 13Q6.700 8 12.500 7.400M9 13q.4-2.500 3.500-2.800" />
              <circle cx="11.800" cy="12.800" r=".8" fill="#fff" />
            </svg>
          </TrayIcon>
          <TrayIcon $gap={9}>
            <svg width="17" height="14" viewBox="0 0 17 14" fill="none" stroke="#fff" strokeWidth="1.100">
              <path d="M.6 4.700h2.200l3.400-3.200v11L2.800 9.300H.6z" />
              <path d="M8 4.800q1.400 2.200 0 4.400M10.300 3q2.600 4 0 8" />
              <path d="M12.700 1.200q4.400 5.800 0 11.600" stroke="#8d8f92" />
            </svg>
          </TrayIcon>
          <Language>ENG</Language>
          <Clock>
            13:53
            <br />
            21. 8. 2020
          </Clock>
          <TrayIcon $gap={15}>
            <svg width="24" height="25" viewBox="0 0 24 25">
              <path d="M0 1h16v13H7l-3.500 3v-3H0z" fill="#fff" />
              <path d="M3 4.500h10M3 7.500h10M3 10.500h6" stroke="#1d2024" />
              <circle cx="15.500" cy="16.500" r="7.800" fill="#2b2e31" stroke="#8b8d90" />
              <text x="15.500" y="20.300" fontSize="10.500" fontWeight="600" textAnchor="middle" fill="#fff" fontFamily="Open Sans, sans-serif">6</text>
            </svg>
          </TrayIcon>
          <DesktopPeek />
        </Tray>
      </Taskbar>
    </Screen>
  );
}
